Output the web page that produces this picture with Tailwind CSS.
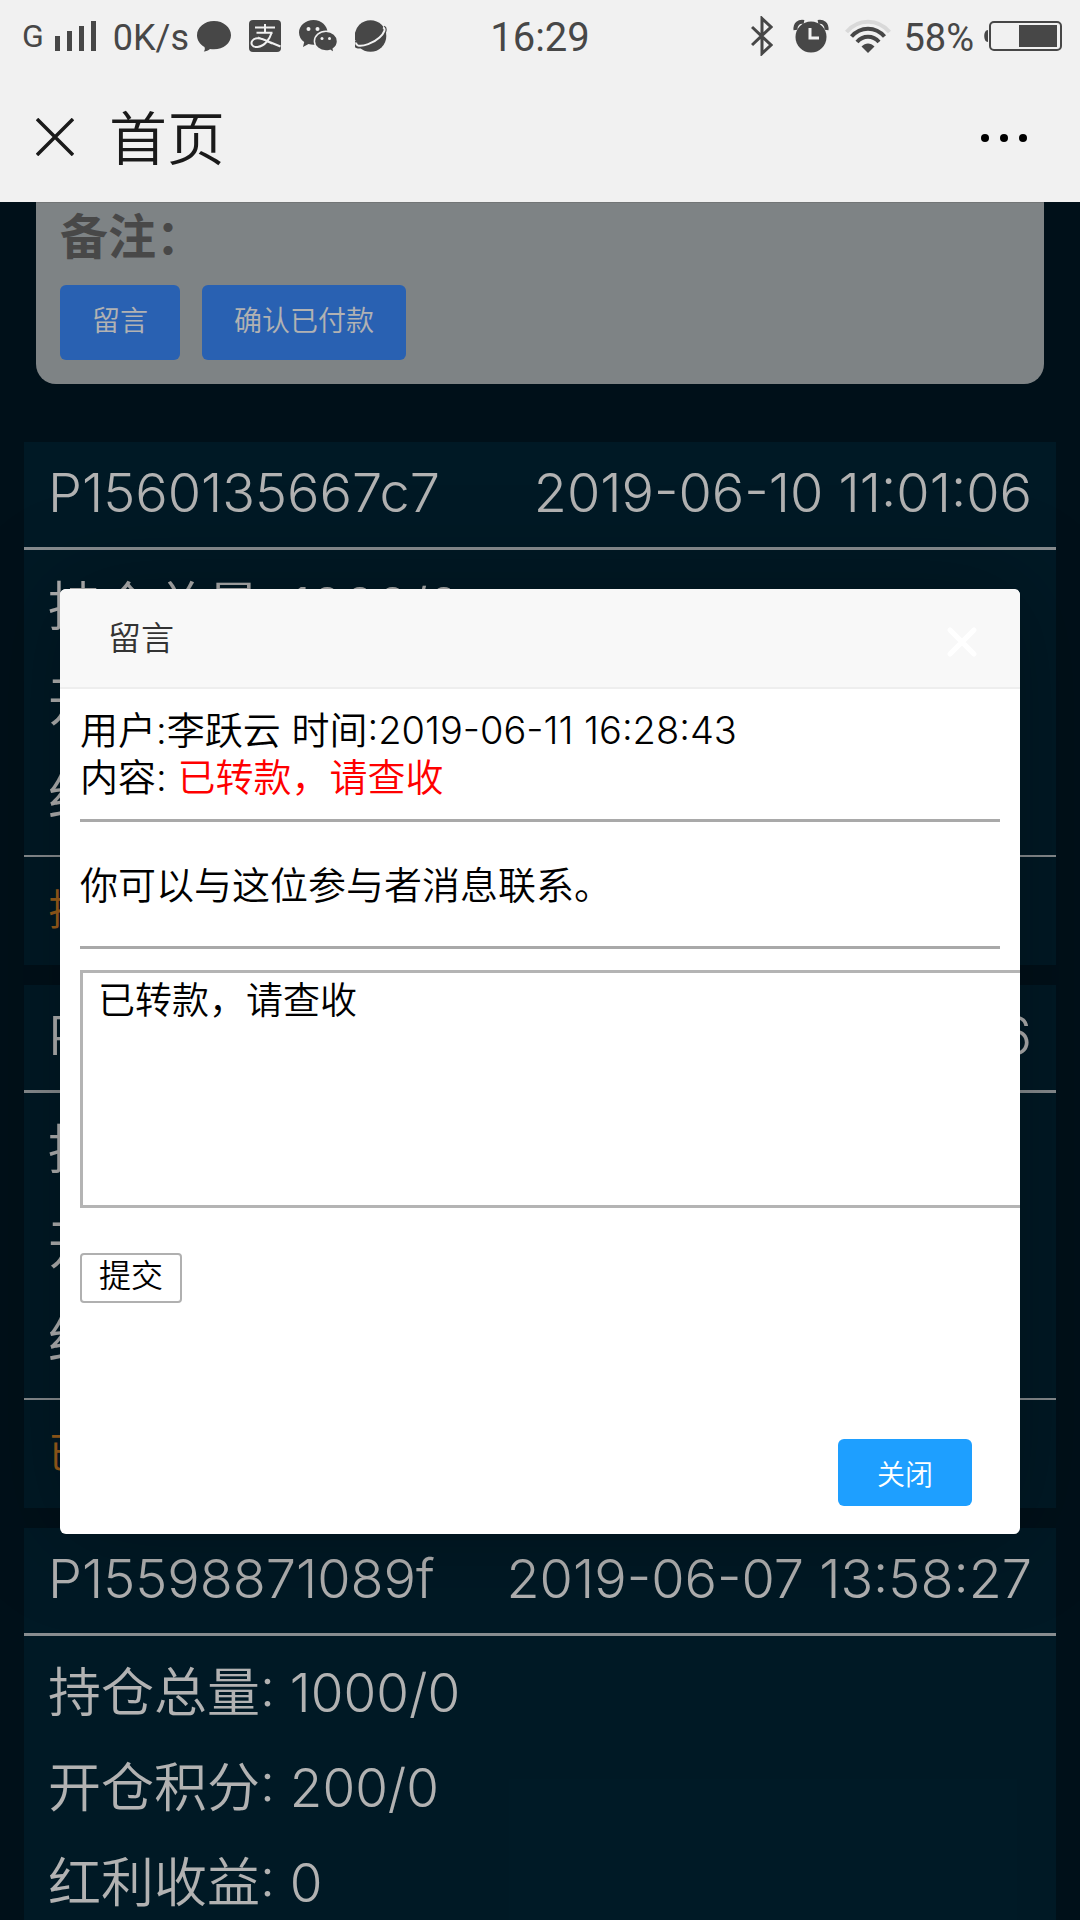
<!DOCTYPE html>
<html lang="zh-CN">
<head>
<meta charset="utf-8">
<meta name="viewport" content="width=device-width, initial-scale=1">
<title>首页</title>
<script src="https://cdn.jsdelivr.net/npm/@tailwindcss/browser@4"></script>
</head>
<body class="flex h-screen flex-col overflow-hidden bg-[#001825] font-['Inter','Noto_Sans_CJK_SC',sans-serif] font-[350]">

<header class="shrink-0 bg-[#f1f1f1]">
  <!-- Status bar -->
  <div class="grid h-[72px] grid-cols-[1fr_auto_1fr] items-center font-['Roboto',sans-serif] font-normal text-[#474747]">
    <div class="flex items-center pl-[22px]">
      <span class="text-[32px] leading-[40px]">G</span>
      <svg class="ml-[11px] h-8 w-[42px]" viewBox="0 0 42 32" fill="currentColor"><path d="M0 16h5v15H0zM12 11h5v20h-5zM24 6h5v25h-5zM36 1h5v30h-5z"/></svg>
      <span class="ml-4 pt-1 text-[36px] leading-[40px]">0K/s</span>
      <svg class="ml-2 h-8 w-[34px]" viewBox="0 0 34 32" fill="currentColor"><path d="M17 1C7.600 1 0 7.400 0 15.200c0 5 3 9.300 7.500 11.800C8.200 29 7.800 30.300 6.800 31.600c2.400-.3 4.600-1.200 6.200-2.700 1.300.3 2.600.4 4 .4 9.400 0 17-6.300 17-14.100S26.400 1 17 1z"/></svg>
      <svg class="ml-[18px] size-8" viewBox="0 0 32 32"><rect width="32" height="32" rx="4" fill="#474747"/><g fill="none" stroke="#f1f1f1" stroke-width="2"><path d="M6 7.500h20M16 4v9M7.500 12.800h16"/><path d="M22.500 13c-1.500 5-6 13-14 14-6 .5-7-4-5-6.500 3.500-4.500 11-1.500 17 1.500l11 4.500"/><path d="M9 17l14 7" stroke-width="1"/></g></svg>
      <svg class="ml-[18px] h-[34px] w-[38px]" viewBox="0 0 38 34"><path fill="#474747" d="M14.500 1C6.500 1 0 6.700 0 13.500c0 4 2 7.300 5.200 9.600L4 28l5.500-3c1.600.5 3.300.8 5 .8 8 0 14-5.700 14-12.300S22.500 1 14.500 1z"/><circle cx="9.500" cy="10" r="2" fill="#f1f1f1"/><circle cx="18.500" cy="10" r="2" fill="#f1f1f1"/><path fill="#474747" stroke="#f1f1f1" stroke-width="1.500" d="M27 12.200c-6.400 0-11.600 4.500-11.600 10S20.600 32 27 32c1.500 0 2.800-.2 4.100-.6l4 2.600-.8-4.200c2.600-1.800 4.200-4.600 4.200-7.600 0-5.500-5.100-10-11.500-10z"/><circle cx="23" cy="19.500" r="1.500" fill="#f1f1f1"/><circle cx="30.500" cy="19.500" r="1.500" fill="#f1f1f1"/></svg>
      <svg class="ml-[18px] size-8" viewBox="0 0 32 32"><circle cx="15.500" cy="16" r="15.800" fill="#474747"/><path d="M28.500 7.500c2.500 1.500 1 6-4 10.500C18 24 8 27 3 26.500c-3-.4-2.500-3-1.500-5" fill="none" stroke="#474747" stroke-width="4"/><path d="M28 7.500c3 1 1.500 5.500-3.500 10C18 23.500 8 26.500 3 25.500c-2-.5-2-1.500-1.800-3" fill="none" stroke="#f1f1f1" stroke-width="2"/></svg>
    </div>
    <time class="pt-1 text-[40px] leading-[44px]">16:29</time>
    <div class="flex items-center justify-end pr-[18px]">
      <svg class="h-10 w-[22px]" viewBox="0 0 22 40" fill="none" stroke="currentColor" stroke-width="3"><path d="M1 11l19 18-9 8.500V2.500L20 11 1 29"/></svg>
      <svg class="ml-5 h-[34px] w-9" viewBox="0 0 36 34"><g fill="none" stroke="#474747" stroke-width="4"><path d="M2.500 11C2 5 6 2 11 3M33.500 11C34 5 30 2 25 3"/></g><circle cx="18" cy="18" r="15.500" fill="#474747"/><path d="M17 9v10h9" fill="none" stroke="#f1f1f1" stroke-width="3"/></svg>
      <svg class="ml-4 h-[34px] w-[46px]" viewBox="0 0 46 34" fill="none" stroke="#474747" stroke-width="4"><path d="M1.500 13C13-.7 33-.7 44.500 13" stroke="#d9d9d9"/><path d="M6.500 17.500c9-10.500 24-10.500 33 0M12 23c6-7 16-7 22 0"/><path d="M16.500 27.500c4-4 9-4 13 0L23 34z" fill="#474747" stroke="none"/></svg>
      <span class="ml-3 pt-1 text-[38px] leading-[40px]">58%</span>
      <svg class="ml-2.5 h-8 w-[78px]" viewBox="0 0 78 32"><rect x="6" y="2" width="71" height="28" rx="4" fill="none" stroke="#474747" stroke-width="2"/><path d="M4 10v12c-5 0-5-12 0-12zM35 5h38v22H35z" fill="#474747"/></svg>
    </div>
  </div>
  <!-- Title bar -->
  <div class="flex h-[130px] items-center pr-[52px] pl-9 text-[#1a1a1a]">
    <button type="button" aria-label="关闭页面"><svg class="size-[38px]" viewBox="0 0 38 38" stroke="currentColor" stroke-width="3.500"><path d="M1 1l36 36M37 1L1 37"/></svg></button>
    <h1 class="ml-[35px] pt-1 text-[58px] leading-[72px] font-[350]">首页</h1>
    <button type="button" aria-label="更多" class="ml-auto"><svg class="h-10 w-12" viewBox="0 0 48 40" fill="#000"><circle cx="5" cy="21" r="4"/><circle cx="24" cy="21" r="4"/><circle cx="43" cy="21" r="4"/></svg></button>
  </div>
</header>

<main class="relative min-h-0 flex-1 overflow-hidden">
  <section class="mx-9 rounded-b-[20px] border-t border-[#a4a8aa] bg-[#b5bcbf] px-6 pb-6">
    <h2 class="text-[48px] leading-[68px] font-bold text-[#686868]">备注：</h2>
    <div class="mt-3.5 flex gap-[22px] text-[28px] text-white">
      <button type="button" class="h-[75px] rounded-md bg-[#3b8cff] px-8 pb-1">留言</button>
      <button type="button" class="h-[75px] rounded-md bg-[#3b8cff] px-8 pb-1">确认已付款</button>
    </div>
  </section>

  <div class="mx-6 mt-[58px] flex flex-col gap-5 text-[53px] leading-[95px] text-white">
    <article class="bg-[#002536]">
      <div class="flex h-[108px] items-center justify-between border-b-3 border-[#c3cbce] px-6 pb-1 text-[54px]"><span>P1560135667c7</span><span>2019-06-10 11:01:06</span></div>
      <div class="h-[307px] border-b-2 border-[#c3cbce] px-6 pt-2.5"><p>持仓总量: 1000/0</p><p>开仓积分: 200/0</p><p>红利收益: 0</p></div>
      <p class="h-[108px] px-6 text-[42px] leading-[106px] text-[#e08828]">排队中</p>
    </article>
    <article class="bg-[#002536]">
      <div class="flex h-[108px] items-center justify-between border-b-3 border-[#c3cbce] px-6 pb-1 text-[54px]"><span>P1560056789a2</span><span>2019-06-09 13:06:26</span></div>
      <div class="h-[307px] border-b-2 border-[#c3cbce] px-6 pt-2.5"><p>持仓总量: 1000/0</p><p>开仓积分: 200/0</p><p>红利收益: 0</p></div>
      <p class="h-[108px] px-6 text-[42px] leading-[106px] text-[#e08828]">已完成</p>
    </article>
    <article class="bg-[#002536]">
      <div class="flex h-[108px] items-center justify-between border-b-3 border-[#c3cbce] px-6 pb-1 text-[54px]"><span>P15598871089f</span><span>2019-06-07 13:58:27</span></div>
      <div class="h-[307px] border-b-2 border-[#c3cbce] px-6 pt-2.5"><p>持仓总量: 1000/0</p><p>开仓积分: 200/0</p><p>红利收益: 0</p></div>
    </article>
  </div>

  <!-- Shade and message dialog -->
  <div class="absolute inset-0 bg-black/30 px-[60px] pt-[387px]">
    <div role="dialog" aria-labelledby="dialog-title" class="flex h-[945px] flex-col overflow-hidden rounded-md bg-white text-[38px] leading-[47px] text-black shadow-[1px_1px_100px_rgba(0,0,0,0.3)]">
      <div class="flex h-[100px] shrink-0 items-center justify-between border-b-2 border-[#eee] bg-[#f8f8f8] pr-[42px] pl-12">
        <h3 id="dialog-title" class="text-[33px] leading-[48px] text-[#333]">留言</h3>
        <button type="button" aria-label="关闭" class="pt-2"><svg class="size-8" viewBox="0 0 32 32" stroke="#fff" stroke-width="5" stroke-linecap="round"><path d="M4 4l24 24M28 4L4 28"/></svg></button>
      </div>
      <form class="px-5 pt-[18px]">
        <p>用户:李跃云 时间:2019-06-11 16:28:43</p>
        <p>内容: <span class="text-[#f00]">已转款，请查收</span></p>
        <hr class="mt-[18px] border-t-3 border-[#a9a9a9]">
        <label for="message" class="mt-10 block">你可以与这位参与者消息联系。</label>
        <hr class="mt-[37px] border-t-3 border-[#a9a9a9]">
        <textarea id="message" class="mt-[21px] block h-[238px] w-[110%] resize-none border-3 border-[#b4b4b4] px-[15px] py-1 text-[37px] leading-[47px] outline-none">已转款，请查收</textarea>
        <button type="submit" class="mt-[45px] block h-[50px] rounded-sm border-2 border-[#b0b0b0] px-[17px] pb-1 text-[32px] leading-[40px]">提交</button>
      </form>
      <div class="mt-auto flex justify-end pr-12 pb-7">
        <button type="button" class="h-[67px] rounded-md bg-[#1e9fff] px-[39px] pt-1 text-[28px] leading-[40px] text-white">关闭</button>
      </div>
    </div>
  </div>
</main>
</body>
</html>
